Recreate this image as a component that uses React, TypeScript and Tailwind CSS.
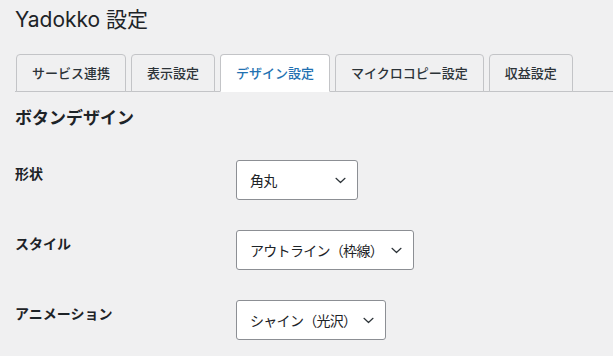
const font = { fontFamily: 'Inter, "Noto Sans CJK JP", sans-serif' };

const tabs = ['サービス連携', '表示設定', 'デザイン設定', 'マイクロコピー設定', '収益設定'];

const rows = [
  { label: '形状', value: '角丸', width: 'w-[122px]' },
  { label: 'スタイル', value: 'アウトライン（枠線）', width: 'w-[178px]' },
  { label: 'アニメーション', value: 'シャイン（光沢）', width: 'w-[150px]' },
];

function Chevron() {
  return (
    <svg className="ml-auto h-[7px] w-[11px] shrink-0" viewBox="0 0 11 7" fill="none">
      <path d="M1 1.3l4.5 4.2L10 1.3" stroke="#2c3338" strokeWidth="1.2" strokeLinecap="round" strokeLinejoin="round" />
    </svg>
  );
}

export default function App() {
  return (
    <div className="min-h-[356px] w-full bg-[#f0f0f1] pl-[15px] text-[#1d2327]" style={font}>
      <h1 className="pt-[5px] text-[21px] leading-[30px] font-normal">Yadokko 設定</h1>

      {/* Tabs */}
      <div className="mt-[19px] flex border-b border-[#c3c4c7]">
        {tabs.map((t, i) => {
          const active = i === 2;
          return (
            <div
              key={t}
              className={`-mb-px ${i === 0 ? 'ml-px' : 'ml-[5px]'} flex h-[38px] items-center rounded-t-[4px] border border-[#c3c4c7] px-[15px] text-[13px] leading-[20px] font-medium ${
                active ? 'border-b-white bg-white text-[#2271b1]' : 'bg-[#f0f0f1] text-[#2c3338]'
              }`}
            >
              {t}
            </div>
          );
        })}
      </div>

      <h2 className="mt-[14px] text-[17px] leading-[24px] font-bold">ボタンデザイン</h2>

      <div className="mt-[30px] flex flex-col gap-[30px]">
        {rows.map((r) => (
          <div key={r.label} className="flex items-start">
            <div className="mt-[4px] w-[221px] shrink-0 text-[14px] leading-[20px] font-bold">{r.label}</div>
            <div
              className={`${r.width} flex h-[40px] items-center gap-[6px] rounded-[3px] border border-[#8c8f94] bg-white pr-[11px] pl-[13px] text-[14px] whitespace-nowrap`}
            >
              <span className="tracking-[-0.7px]">{r.value}</span>
              <Chevron />
            </div>
          </div>
        ))}
      </div>
    </div>
  );
}
